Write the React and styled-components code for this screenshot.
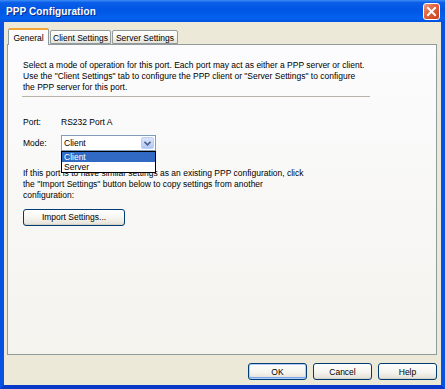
import React from "react";
import styled, { createGlobalStyle } from "styled-components";

const GlobalStyle = createGlobalStyle`
  html, body {
    margin: 0;
    padding: 0;
    overflow: hidden;
    background: #ffffff;
  }
  * {
    box-sizing: border-box;
  }
`;

const Window = styled.div`
  width: 445px;
  height: 389px;
  display: flex;
  flex-direction: column;
  font-family: "Liberation Sans", Arial, sans-serif;
  font-size: 8.5px;
  color: #000;
`;

const TitleBar = styled.div`
  height: 22px;
  flex: none;
  display: flex;
  align-items: center;
  justify-content: space-between;
  padding: 0 5px 0 6px;
  background: linear-gradient(
    to bottom,
    #3d8cf5 0%,
    #0a5ee8 12%,
    #0056e4 45%,
    #0461ee 85%,
    #0050dc 100%
  );
`;

const Title = styled.span`
  color: #fff;
  font-weight: bold;
  font-size: 10px;
  text-shadow: 1px 1px 0 #0a2a8a;
  letter-spacing: 0.1px;
`;

const CloseButton = styled.div`
  width: 17px;
  height: 17px;
  margin-top: 1px;
  border: 1px solid #fff;
  border-radius: 3px;
  background: linear-gradient(135deg, #ee9a7c 0%, #e2603b 45%, #c8401c 100%);
  display: flex;
  align-items: center;
  justify-content: center;
`;

const Body = styled.div`
  flex: 1;
  display: flex;
  flex-direction: column;
  background: #ece9d8;
  border-left: 4px solid #0752e0;
  border-right: 4px solid #0752e0;
  border-bottom: 4px solid #0838c8;
  padding: 6px 4px 0 3px;
`;

const TabStrip = styled.div`
  display: flex;
  align-items: flex-end;
  height: 16px;
  padding-left: 1px;
  position: relative;
  z-index: 1;
`;

const Tab = styled.div`
  width: ${(p) => p.w}px;
  height: ${(p) => (p.active ? 17 : 14)}px;
  margin-bottom: ${(p) => (p.active ? -1 : 0)}px;
  margin-right: 1px;
  display: flex;
  align-items: center;
  justify-content: center;
  border: 1px solid #919b9c;
  border-bottom: ${(p) => (p.active ? "none" : "1px solid #919b9c")};
  border-radius: 2px 2px 0 0;
  background: ${(p) =>
    p.active
      ? "#fcfcfe"
      : "linear-gradient(to bottom, #ffffff 0%, #f3f3ef 60%, #e4e2da 100%)"};
  border-top: ${(p) => (p.active ? "2px solid #f0a534" : "1px solid #919b9c")};
  padding-top: ${(p) => (p.active ? 0 : 1)}px;
`;

const Panel = styled.div`
  height: 311px;
  flex: none;
  border: 1px solid #919b9c;
  background: linear-gradient(to bottom, #fcfcfe 0%, #f4f3ee 100%);
  padding: 15px 15px 0 15px;
  display: flex;
  flex-direction: column;
  align-items: flex-start;
`;

const Paragraph = styled.p`
  margin: ${(p) => p.mt || 0}px 0 0 0;
  line-height: 10.8px;
  white-space: pre-line;
`;

const Separator = styled.div`
  width: 348px;
  height: 1px;
  margin-top: 4px;
  margin-left: -1px;
  background: #b8b5a8;
`;

const FieldRow = styled.div`
  display: flex;
  align-items: center;
  height: 16px;
  margin-top: ${(p) => p.mt}px;
`;

const FieldLabel = styled.span`
  width: 38px;
`;

const ComboWrap = styled.div`
  position: relative;
  width: 95px;
  height: 16px;
`;

const Combo = styled.div`
  height: 16px;
  border: 1px solid #7f9db9;
  background: #fff;
  display: flex;
  align-items: center;
  justify-content: space-between;
  padding: 1px 1px 1px 2px;
`;

const ArrowButton = styled.div`
  width: 13px;
  height: 100%;
  border: 1px solid #bccffa;
  border-radius: 2px;
  background: linear-gradient(to bottom, #d9e5fd 0%, #c3d4fb 60%, #b2c6f5 100%);
  display: flex;
  align-items: center;
  justify-content: center;
`;

const DropList = styled.div`
  position: absolute;
  top: 100%;
  left: 0;
  width: 100%;
  border: 1px solid #000;
  background: #fff;
`;

const DropItem = styled.div`
  height: 10px;
  line-height: 10px;
  padding-left: 2px;
  background: ${(p) => (p.selected ? "#316ac5" : "#fff")};
  color: ${(p) => (p.selected ? "#fff" : "#000")};
`;

const XpButton = styled.button`
  font-family: inherit;
  font-size: 8.5px;
  color: #000;
  width: ${(p) => p.w}px;
  height: 17px;
  margin-top: ${(p) => p.mt || 0}px;
  padding: 0;
  border: 1px solid #003c74;
  border-radius: 3px;
  background: linear-gradient(to bottom, #ffffff 0%, #f5f4ef 55%, #e3e0d5 100%);
  box-shadow: ${(p) =>
    p.primary
      ? "inset 0 0 0 1px #aecdf7, inset 0 -1px 0 1px #7aa4e8"
      : "inset 0 -1px 0 #d6d0c5"};
  cursor: default;
`;

const Footer = styled.div`
  display: flex;
  justify-content: flex-end;
  gap: 6px;
  padding-top: 8px;
`;

export default function App() {
  return (
    <>
      <GlobalStyle />
      <Window>
        <TitleBar>
          <Title>PPP Configuration</Title>
          <CloseButton>
            <svg width="11" height="11" viewBox="0 0 11 11">
              <path
                d="M2 2 L9 9 M9 2 L2 9"
                stroke="#fff"
                strokeWidth="2"
                strokeLinecap="square"
              />
            </svg>
          </CloseButton>
        </TitleBar>
        <Body>
          <TabStrip>
            <Tab active w={41}>General</Tab>
            <Tab w={61}>Client Settings</Tab>
            <Tab w={66}>Server Settings</Tab>
          </TabStrip>
          <Panel>
            <Paragraph>
              {"Select a mode of operation for this port. Each port may act as either a PPP server or client.\nUse the \"Client Settings\" tab to configure the PPP client or \"Server Settings\" to configure\nthe PPP server for this port."}
            </Paragraph>
            <Separator />
            <FieldRow mt={17}>
              <FieldLabel>Port:</FieldLabel>
              <span>RS232 Port A</span>
            </FieldRow>
            <FieldRow mt={5}>
              <FieldLabel>Mode:</FieldLabel>
              <ComboWrap>
                <Combo>
                  <span>Client</span>
                  <ArrowButton>
                    <svg width="7" height="5" viewBox="0 0 7 5">
                      <path
                        d="M0.5 0.8 L3.5 3.8 L6.5 0.8"
                        fill="none"
                        stroke="#4d6185"
                        strokeWidth="1.6"
                      />
                    </svg>
                  </ArrowButton>
                </Combo>
                <DropList>
                  <DropItem selected>Client</DropItem>
                  <DropItem>Server</DropItem>
                </DropList>
              </ComboWrap>
            </FieldRow>
            <Paragraph mt={17}>
              {"If this port is to have similar settings as an existing PPP configuration, click\nthe \"Import Settings\" button below to copy settings from another\nconfiguration:"}
            </Paragraph>
            <XpButton w={102} mt={8}>Import Settings...</XpButton>
          </Panel>
          <Footer>
            <XpButton w={59} primary>OK</XpButton>
            <XpButton w={59}>Cancel</XpButton>
            <XpButton w={59}>Help</XpButton>
          </Footer>
        </Body>
      </Window>
    </>
  );
}
